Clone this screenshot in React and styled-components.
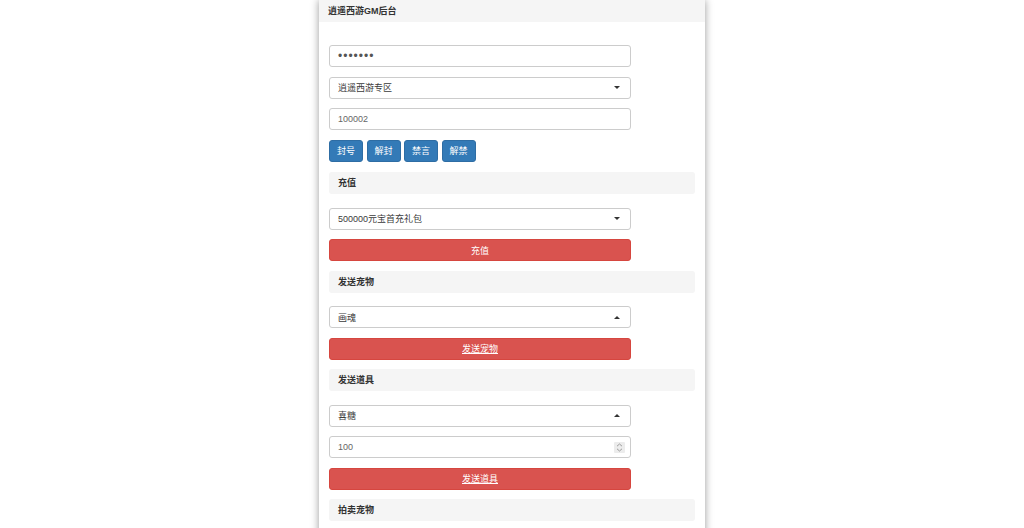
import styled, { createGlobalStyle } from "styled-components";

const GlobalStyle = createGlobalStyle`
  html, body {
    margin: 0;
    padding: 0;
    background: #fff;
    font-family: "Liberation Sans", "Noto Sans CJK SC", sans-serif;
    font-size: 9px;
    color: #333;
  }
`;

const Page = styled.div`
  height: 528px;
  overflow: hidden;
  display: flex;
  justify-content: center;
`;

const Panel = styled.div`
  width: 386px;
  min-height: 600px;
  background: #fff;
  box-shadow: 0 0 8px rgba(0, 0, 0, 0.4);
`;

const PanelHeading = styled.div`
  height: 22px;
  line-height: 22px;
  padding: 0 9px;
  background: #f5f5f5;
  font-weight: bold;
  color: #333;
`;

const PanelBody = styled.div`
  padding: 23px 10px 0;
`;

const Field = styled.div`
  position: relative;
  width: 302px;
  height: 22px;
  margin-bottom: 9.5px;
  box-sizing: border-box;
  border: 1px solid #ccc;
  border-radius: 3px;
  display: flex;
  align-items: center;
  padding: 0 8px;
  color: ${(p) => (p.$muted ? "#666" : "#3a3a3a")};
  background: #fff;
`;

const Value = styled.span`
  flex: 1;
`;

const Dots = styled.span`
  flex: 1;
  font-size: 12px;
  letter-spacing: 1px;
  color: #555;
`;

const Caret = styled.span`
  width: 0;
  height: 0;
  margin-right: 2px;
  border-left: 3px solid transparent;
  border-right: 3px solid transparent;
  ${(p) =>
    p.$up
      ? "border-bottom: 3px solid #333;"
      : "border-top: 3px solid #333;"}
`;

const Spinner = styled.span`
  width: 11px;
  height: 11px;
  margin-right: -3px;
  background: #ececec;
  border-radius: 1px;
  display: flex;
  align-items: center;
  justify-content: center;
`;

const BtnRow = styled.div`
  display: flex;
  gap: 3.5px;
  margin-bottom: 10px;
`;

const BlueBtn = styled.button`
  height: 22.5px;
  padding: 0 7px;
  font-family: inherit;
  font-size: 9px;
  color: #fff;
  background: #337ab7;
  border: 1px solid #2e6da4;
  border-radius: 3px;
`;

const RedBtn = styled.button`
  display: block;
  width: 302px;
  height: 22px;
  margin-bottom: 9.5px;
  font-family: inherit;
  font-size: 9px;
  color: #fff;
  background: #d9534f;
  border: 1px solid #d6463f;
  border-radius: 3px;
  text-decoration: ${(p) => (p.$link ? "underline" : "none")};
`;

const Section = styled.div`
  height: 22px;
  line-height: 22px;
  margin-bottom: 13.5px;
  padding: 0 9px;
  background: #f5f5f5;
  border-radius: 3px;
  font-weight: bold;
  color: #333;
`;

function Select({ value, up }) {
  return (
    <Field>
      <Value>{value}</Value>
      <Caret $up={up} />
    </Field>
  );
}

export default function App() {
  return (
    <>
      <GlobalStyle />
      <Page>
        <Panel>
          <PanelHeading>逍遥西游GM后台</PanelHeading>
          <PanelBody>
            <Field>
              <Dots>•••••••</Dots>
            </Field>
            <Select value="逍遥西游专区" />
            <Field $muted>
              <Value>100002</Value>
            </Field>
            <BtnRow>
              <BlueBtn>封号</BlueBtn>
              <BlueBtn>解封</BlueBtn>
              <BlueBtn>禁言</BlueBtn>
              <BlueBtn>解禁</BlueBtn>
            </BtnRow>

            <Section>充值</Section>
            <Select value="500000元宝首充礼包" />
            <RedBtn>充值</RedBtn>

            <Section>发送宠物</Section>
            <Select value="画魂" up />
            <RedBtn $link>发送宠物</RedBtn>

            <Section>发送道具</Section>
            <Select value="喜糖" up />
            <Field $muted>
              <Value>100</Value>
              <Spinner>
                <svg width="7" height="9" viewBox="0 0 7 9">
                  <path
                    d="M1 3.2 L3.5 1 L6 3.2 M1 5.8 L3.5 8 L6 5.8"
                    fill="none"
                    stroke="#888"
                    strokeWidth="0.8"
                  />
                </svg>
              </Spinner>
            </Field>
            <RedBtn $link>发送道具</RedBtn>

            <Section>拍卖宠物</Section>
          </PanelBody>
        </Panel>
      </Page>
    </>
  );
}
